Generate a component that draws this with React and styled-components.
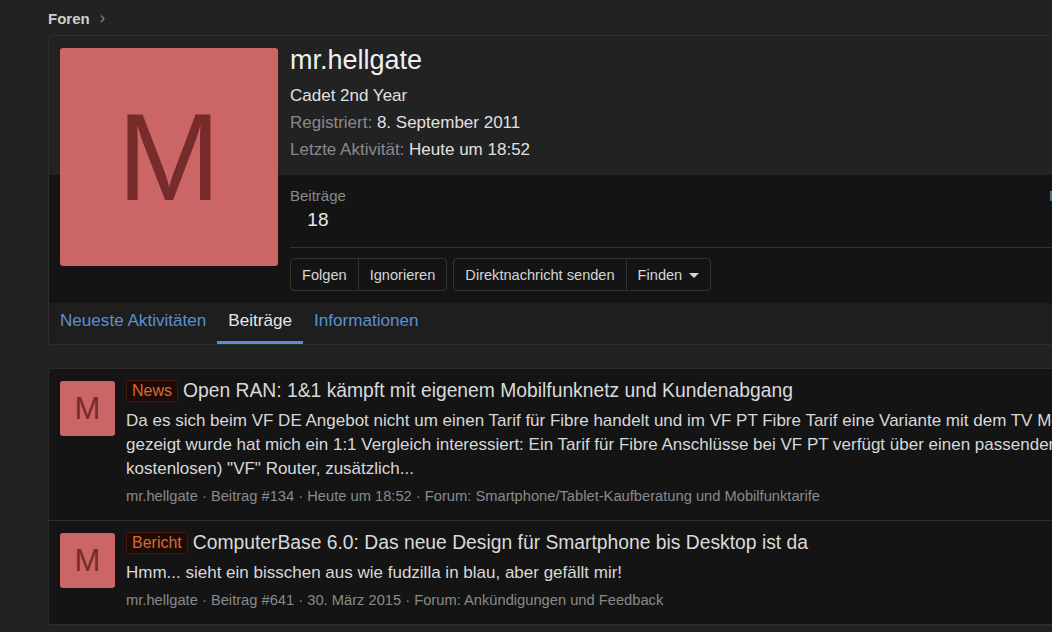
import React from 'react';
import styled, { createGlobalStyle } from 'styled-components';

const GlobalStyle = createGlobalStyle`
    html, body {
        margin : 0;
        padding : 0;
        background : #222222;
        overflow : hidden;
    }

    body {
        font-family : 'Liberation Sans', Arial, sans-serif;
        color : #dcdcdc;
    }
`

const Page = styled.div`
    width : 1180px;
    padding : 8px 0 40px 48px;
`

const Breadcrumb = styled.div`
    display : flex;
    align-items : center;
    gap : 10px;
    height : 20px;
    margin-bottom : 7px;
    font-size : 15px;
    font-weight : bold;
    color : #cfcfcf;
`

const Chevron = styled.span`
    font-weight : normal;
    font-size : 16px;
    color : #8a8a8a;
`

const ProfileCard = styled.div`
    position : relative;
    border : 1px solid #2e2e2e;
    border-radius : 4px;
    overflow : hidden;
`

const Avatar = styled.div`
    position : absolute;
    left : 11px;
    top : 12px;
    width : ${p => p.size}px;
    height : ${p => p.size}px;
    border-radius : 3px;
    background : #cc6666;
    color : #772b2b;
    display : flex;
    align-items : center;
    justify-content : center;
    font-size : ${p => Math.round(p.size * 0.57)}px;
    line-height : 1;
`

const SmallAvatar = styled(Avatar)`
    position : static;
    flex : 0 0 auto;
`

const HeaderTop = styled.div`
    background : #222222;
    padding : 8px 0 12px 241px;
`

const Name = styled.h1`
    margin : 0;
    font-size : 27px;
    font-weight : normal;
    line-height : 32px;
    color : #f0f0f0;
`

const Title = styled.div`
    margin-top : 7px;
    font-size : 17px;
    line-height : 26px;
    color : #e0e0e0;
`

const InfoLine = styled.div`
    font-size : 17px;
    line-height : 27px;
    color : #e0e0e0;
`

const Label = styled.span`
    color : #8a8a8a;
`

const HeaderStats = styled.div`
    background : #141414;
    padding : 11px 0 12px 241px;
`

const StatRow = styled.div`
    display : flex;
    gap : 703px;
    padding-bottom : 15px;
    border-bottom : 1px solid #333333;
`

const Stat = styled.dl`
    margin : 0;
    text-align : center;
`

const StatLabel = styled.dt`
    font-size : 15px;
    line-height : 20px;
    color : #8a8a8a;
`

const StatValue = styled.dd`
    margin : 2px 0 0 0;
    font-size : 19px;
    line-height : 24px;
    color : #e6e6e6;
`

const Buttons = styled.div`
    display : flex;
    gap : 6px;
    margin-top : 10px;
`

const ButtonGroup = styled.div`
    display : flex;
    border : 1px solid #333333;
    border-radius : 4px;
    background : #141414;
`

const Button = styled.button`
    display : flex;
    align-items : center;
    gap : 7px;
    height : 31px;
    padding : 0 11px;
    border : none;
    border-left : ${p => p.first ? 'none' : '1px solid #333333'};
    background : transparent;
    font-family : inherit;
    font-size : 14.6px;
    color : #d6d6d6;
`

const Caret = styled.span`
    width : 0;
    height : 0;
    margin-top : 2px;
    border-left : 5px solid transparent;
    border-right : 5px solid transparent;
    border-top : 5px solid #d6d6d6;
`

const Tabs = styled.div`
    display : flex;
    background : #1e1e1e;
`

const Tab = styled.a`
    display : block;
    padding : 8px 11px 0 11px;
    height : 30px;
    font-size : 17.1px;
    line-height : 20px;
    color : ${p => p.active ? '#e6e6e6' : '#5b8fd6'};
    border-bottom : 3px solid ${p => p.active ? '#5b8fd6' : 'transparent'};
`

const PostList = styled.div`
    margin-top : 23px;
    background : #141414;
    border : 1px solid #2a2a2a;
    border-radius : 4px;
`

const Post = styled.div`
    display : flex;
    gap : 11px;
    padding : 12px 11px 14px 11px;
    border-bottom : 1px solid #2e2e2e;
`

const PostBody = styled.div`
    flex : 1;
    min-width : 0;
`

const PostTitle = styled.div`
    display : flex;
    align-items : center;
    gap : 5px;
    margin-top : -2px;
    height : 24px;
    font-size : 19.3px;
    color : #dadada;
    white-space : nowrap;
`

const Badge = styled.span`
    padding : 1px 5px;
    font-size : 16px;
    line-height : 18px;
    color : #d9683c;
    background : #1e0b03;
    border : 1px solid #42190a;
    border-radius : 3px;
`

const Snippet = styled.div`
    margin-top : 6px;
    font-size : 17px;
    line-height : 24px;
    color : #d8d8d8;
    white-space : nowrap;
`

const Meta = styled.div`
    margin-top : 5px;
    font-size : 14.7px;
    line-height : 20px;
    color : #8a8a8a;
    white-space : nowrap;
`

const posts = [
    {
        id : 134,
        tag : 'News',
        title : 'Open RAN: 1&1 kämpft mit eigenem Mobilfunknetz und Kundenabgang',
        lines : [
            'Da es sich beim VF DE Angebot nicht um einen Tarif für Fibre handelt und im VF PT Fibre Tarif eine Variante mit dem TV Modul',
            'gezeigt wurde hat mich ein 1:1 Vergleich interessiert: Ein Tarif für Fibre Anschlüsse bei VF PT verfügt über einen passenden (im Preis',
            'kostenlosen) "VF" Router, zusätzlich...',
        ],
        date : 'Heute um 18:52',
        forum : 'Smartphone/Tablet-Kaufberatung und Mobilfunktarife',
    },
    {
        id : 641,
        tag : 'Bericht',
        title : 'ComputerBase 6.0: Das neue Design für Smartphone bis Desktop ist da',
        lines : ['Hmm... sieht ein bisschen aus wie fudzilla in blau, aber gefällt mir!'],
        date : '30. März 2015',
        forum : 'Ankündigungen und Feedback',
    },
]

const App = () => {
    return (
        <Page>
            <GlobalStyle />
            <Breadcrumb>
                Foren <Chevron>›</Chevron>
            </Breadcrumb>

            <ProfileCard>
                <Avatar size={218}>M</Avatar>
                <HeaderTop>
                    <Name>mr.hellgate</Name>
                    <Title>Cadet 2nd Year</Title>
                    <InfoLine><Label>Registriert:</Label> 8. September 2011</InfoLine>
                    <InfoLine><Label>Letzte Aktivität:</Label> Heute um 18:52</InfoLine>
                </HeaderTop>
                <HeaderStats>
                    <StatRow>
                        <Stat>
                            <StatLabel>Beiträge</StatLabel>
                            <StatValue>18</StatValue>
                        </Stat>
                        <Stat>
                            <StatLabel>Punkte</StatLabel>
                            <StatValue>0</StatValue>
                        </Stat>
                    </StatRow>
                    <Buttons>
                        <ButtonGroup>
                            <Button first>Folgen</Button>
                            <Button>Ignorieren</Button>
                        </ButtonGroup>
                        <ButtonGroup>
                            <Button first>Direktnachricht senden</Button>
                            <Button>Finden <Caret /></Button>
                        </ButtonGroup>
                    </Buttons>
                </HeaderStats>
                <Tabs>
                    <Tab>Neueste Aktivitäten</Tab>
                    <Tab active>Beiträge</Tab>
                    <Tab>Informationen</Tab>
                </Tabs>
            </ProfileCard>

            <PostList>
                {posts.map(item =>
                    <Post key={item.id}>
                        <SmallAvatar size={55}>M</SmallAvatar>
                        <PostBody>
                            <PostTitle>
                                <Badge>{item.tag}</Badge>
                                {item.title}
                            </PostTitle>
                            <Snippet>
                                {item.lines.map((line, i) => <div key={i}>{line}</div>)}
                            </Snippet>
                            <Meta>mr.hellgate · Beitrag #{item.id} · {item.date} · Forum: {item.forum}</Meta>
                        </PostBody>
                    </Post>
                )}
            </PostList>
        </Page>
    )
}

export default App;
